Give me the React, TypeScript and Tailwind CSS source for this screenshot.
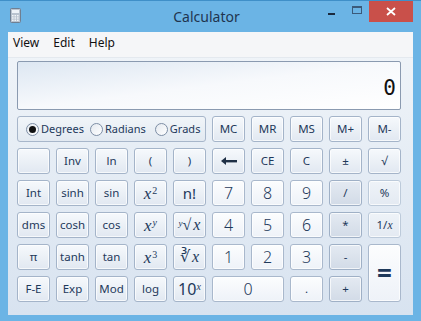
import type { ReactNode } from 'react';

type Kind = 'fn' | 'num' | 'op' | 'lite';

const kinds: Record<Kind, string> = {
  fn: 'border-[#a4b4c9] bg-linear-to-b from-[#f6f9fc] to-[#e1e8f1] text-[#1e395b]',
  num: 'border-[#a9b8cc] bg-linear-to-b from-[#fcfdfe] to-[#eef2f8] text-[#1e395b]',
  op: 'border-[#9fb0c6] bg-linear-to-b from-[#e4eaf2] to-[#d2dbe7] text-[#1e395b]',
  lite: 'border-[#bccada] bg-linear-to-b from-[#eef3f8] to-[#e4eaf2] text-[#1e395b]',
};

function Key({ children, kind = 'fn', className = '' }: { children?: ReactNode; kind?: Kind; className?: string }) {
  return (
    <button
      className={`flex items-center justify-center rounded-[3px] border text-[11.5px] shadow-[inset_0_0_0_1px_rgba(255,255,255,0.7)] ${kinds[kind]} ${className}`}
    >
      {children}
    </button>
  );
}

function Math({ base, sup }: { base: ReactNode; sup: ReactNode }) {
  return (
    <span className="font-['Liberation_Serif'] text-[17px] italic leading-none">
      {base}
      <sup className="ml-[1px] text-[10px] not-italic">{sup}</sup>
    </span>
  );
}

function Radio({ label, checked, className = '' }: { label: string; checked?: boolean; className?: string }) {
  return (
    <label className={`flex items-center gap-[2px] ${className}`}>
      <span className="flex h-[13px] w-[13px] items-center justify-center rounded-full border border-[#7d8ea5] bg-linear-to-br from-[#e4e9ef] to-white">
        {checked && <span className="h-[7px] w-[7px] rounded-full bg-[#111]" />}
      </span>
      <span>{label}</span>
    </label>
  );
}

function Backspace() {
  return (
    <svg width="16" height="8" viewBox="0 0 16 8">
      <path d="M0 4 L5 0 L5 8 Z" fill="#1e2f45" />
      <rect x="4" y="3" width="12" height="2.4" fill="#1e2f45" />
    </svg>
  );
}

export default function App() {
  const digit = 'text-[16px] font-light';
  return (
    <div className="flex h-[321px] w-[421px] flex-col border-t border-[#3f8fc8] bg-[#6bb4e5] font-['Noto_Sans','Open_Sans',sans-serif] text-[12px] text-[#1e395b]">
      {/* title bar */}
      <div className="grid h-[31px] grid-cols-[1fr_auto_1fr] pr-[8px]">
        <div className="flex items-start pl-[10px] pt-[7px]">
          <svg width="11" height="15" viewBox="0 0 11 15">
            <rect x="0.5" y="0.5" width="10" height="14" rx="1" fill="#b9c3cf" stroke="#6f7f92" />
            <rect x="2" y="2" width="7" height="3" fill="#eef3f8" />
            {[0, 1, 2].map((r) =>
              [0, 1, 2].map((c) => <rect key={`${r}${c}`} x={2 + c * 2.5} y={7 + r * 2.3} width="1.6" height="1.4" fill="#f2f5f8" />)
            )}
          </svg>
        </div>
        <div className="pt-[5px] text-[14px] text-[#1f344f]">Calculator</div>
        <div className="flex items-start justify-end">
          <div className="flex h-[21px] w-[25px] items-center justify-center">
            <span className="mt-[4px] h-[2px] w-[7px] bg-[#1b2a3e]" />
          </div>
          <div className="flex h-[21px] w-[25px] items-center justify-center">
            <span className="mb-[4px] h-[8px] w-[10px] border border-t-2 border-[#3b5a7a]" />
          </div>
          <div className="flex h-[21px] w-[44px] items-center justify-center bg-[#c9504a]">
            <svg width="10" height="9" viewBox="0 0 10 9">
              <path d="M1 1 L9 8 M9 1 L1 8" stroke="white" strokeWidth="1.8" />
            </svg>
          </div>
        </div>
      </div>

      {/* client */}
      <div className="mx-[8px] mb-[6px] flex flex-1 flex-col bg-linear-to-b from-[#f1f5f9] to-[#d8e3f0]">
        <div className="flex h-[26px] items-center gap-[14px] border-b border-[#e4e9ef] bg-[#f5f6f8] pb-[4px] pl-[5px] text-[12px] text-[#101010]">
          <span>View</span>
          <span>Edit</span>
          <span>Help</span>
        </div>

        <div className="grid grid-cols-[repeat(10,33px)] grid-rows-[49px_repeat(6,26px)] gap-[6px] px-[9px] pt-[3px]">
          <div className="col-span-10 flex items-end justify-end rounded-[2px] border border-[#8a9ab0] bg-linear-to-br from-[#dde7f2] via-[#f7f9fc] to-white pb-[5px] pr-[4px] font-['DejaVu_Sans_Mono',monospace] text-[21px] text-[#111]">
            0
          </div>

          <div className="col-span-5 flex items-center rounded-[3px] border border-[#a7b6ca] bg-linear-to-b from-[#f1f5f9] to-[#e2e9f1] pl-[8px] text-[11px] text-[#1e395b]">
            <Radio label="Degrees" checked />
            <Radio label="Radians" className="ml-[6px]" />
            <Radio label="Grads" className="ml-[9px]" />
          </div>
          <Key>MC</Key>
          <Key>MR</Key>
          <Key>MS</Key>
          <Key>M+</Key>
          <Key>M-</Key>

          <Key />
          <Key>Inv</Key>
          <Key>ln</Key>
          <Key>(</Key>
          <Key>)</Key>
          <Key><Backspace /></Key>
          <Key>CE</Key>
          <Key>C</Key>
          <Key>±</Key>
          <Key>√</Key>

          <Key>Int</Key>
          <Key>sinh</Key>
          <Key>sin</Key>
          <Key><Math base="x" sup="2" /></Key>
          <Key className="text-[15px]">n!</Key>
          <Key kind="num" className={digit}>7</Key>
          <Key kind="num" className={digit}>8</Key>
          <Key kind="num" className={digit}>9</Key>
          <Key kind="op">/</Key>
          <Key kind="lite">%</Key>

          <Key>dms</Key>
          <Key>cosh</Key>
          <Key>cos</Key>
          <Key><Math base="x" sup={<i>y</i>} /></Key>
          <Key>
            <span className="font-['Liberation_Serif'] text-[16px] leading-none">
              <sup className="text-[9px] italic">y</sup>√<i className="ml-[2px]">x</i>
            </span>
          </Key>
          <Key kind="num" className={digit}>4</Key>
          <Key kind="num" className={digit}>5</Key>
          <Key kind="num" className={digit}>6</Key>
          <Key kind="op">*</Key>
          <Key kind="lite">
            <span>1/<i className="font-['Liberation_Serif']">x</i></span>
          </Key>

          <Key>π</Key>
          <Key>tanh</Key>
          <Key>tan</Key>
          <Key><Math base="x" sup="3" /></Key>
          <Key>
            <span className="font-['Liberation_Serif'] text-[16px] leading-none">
              ∛<i className="ml-[2px]">x</i>
            </span>
          </Key>
          <Key kind="num" className={digit}>1</Key>
          <Key kind="num" className={digit}>2</Key>
          <Key kind="num" className={digit}>3</Key>
          <Key kind="op">-</Key>
          <Key kind="num" className="row-span-2 text-[26px] font-bold">=</Key>

          <Key>F-E</Key>
          <Key>Exp</Key>
          <Key>Mod</Key>
          <Key>log</Key>
          <Key>
            <span className="text-[16px] leading-none">
              10<sup className="font-['Liberation_Serif'] text-[10px] italic">x</sup>
            </span>
          </Key>
          <Key kind="num" className={`col-span-2 ${digit}`}>0</Key>
          <Key kind="num">.</Key>
          <Key kind="op">+</Key>
        </div>
      </div>
    </div>
  );
}
